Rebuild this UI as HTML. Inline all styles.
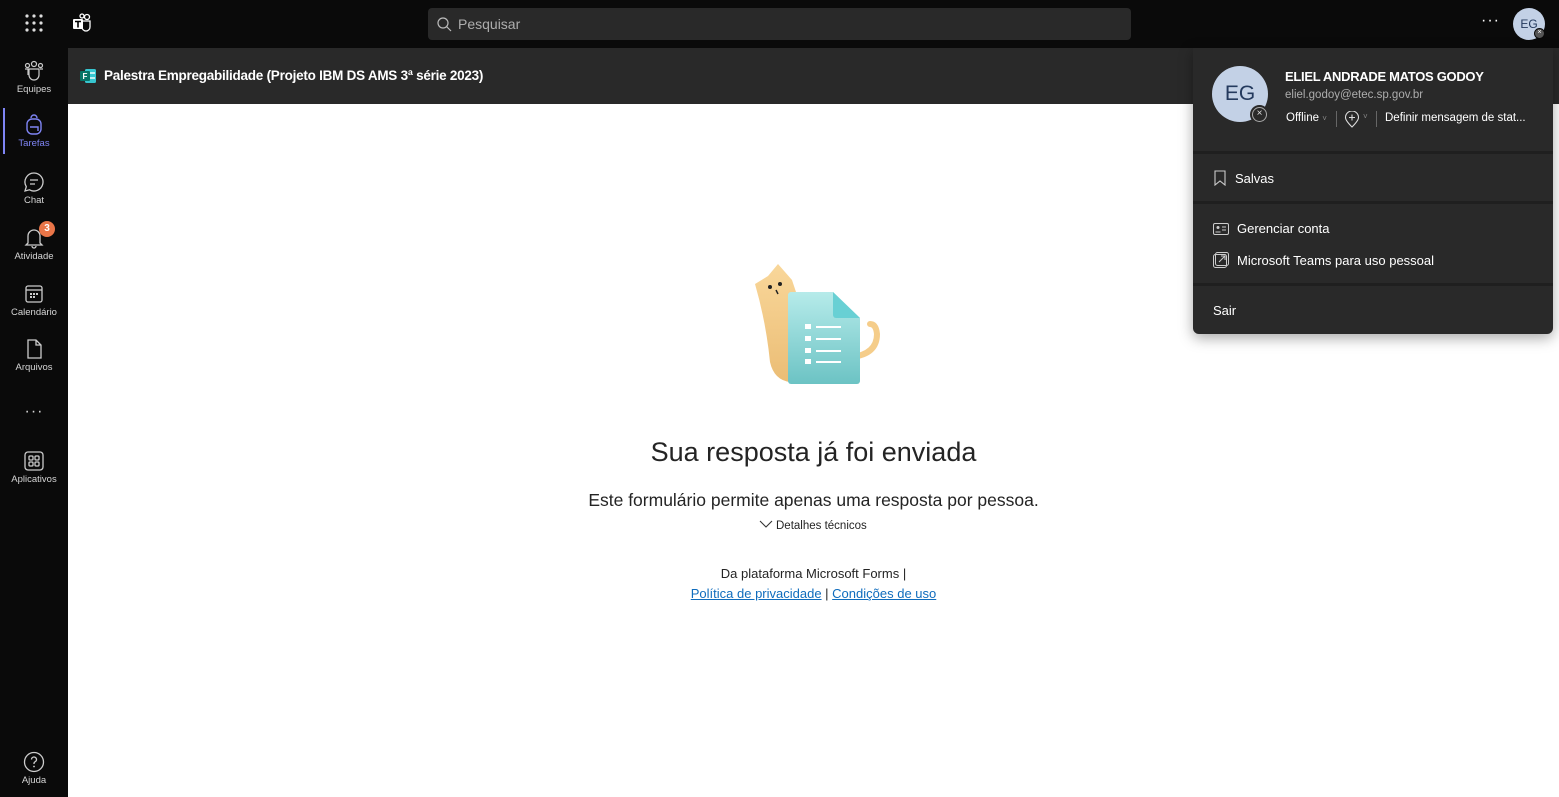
<!DOCTYPE html>
<html><head><meta charset="utf-8"><style>
*{margin:0;padding:0;box-sizing:border-box}
body{width:1559px;height:797px;overflow:hidden;background:#fff;font-family:"Liberation Sans",sans-serif;position:relative}
.top{position:absolute;left:0;top:0;width:1559px;height:48px;background:#0a0a0a}
.side{position:absolute;left:0;top:48px;width:68px;height:749px;background:#0a0a0a}
.nav{position:absolute;left:0;width:68px;text-align:center;color:#d6d6d6;font-size:9.5px}
.nav svg{display:block;margin:0 auto 2px}
.title{position:absolute;left:68px;top:48px;width:1491px;height:56px;background:#292929}
.pop{position:absolute;left:1193px;top:48px;width:360px;height:286px;background:#292929;border-radius:0 0 6px 6px;box-shadow:0 4px 14px rgba(0,0,0,.35);color:#fff}
.sep{position:absolute;left:0;width:360px;height:3px;background:#1f1f1f}
.item{position:absolute;left:20px;font-size:13px;color:#fff;display:flex;align-items:center;gap:8px}
</style></head><body>
<div class="top">
 <svg style="position:absolute;left:25px;top:14px" width="18" height="18"><g fill="#ddd"><circle cx="2" cy="2" r="1.6"/><circle cx="9" cy="2" r="1.6"/><circle cx="16" cy="2" r="1.6"/><circle cx="2" cy="9" r="1.6"/><circle cx="9" cy="9" r="1.6"/><circle cx="16" cy="9" r="1.6"/><circle cx="2" cy="16" r="1.6"/><circle cx="9" cy="16" r="1.6"/><circle cx="16" cy="16" r="1.6"/></g></svg>
 <svg style="position:absolute;left:72px;top:13px" width="20" height="20"><circle cx="15" cy="4" r="2.5" fill="none" stroke="#fff" stroke-width="1.3"/><circle cx="10" cy="3" r="2" fill="none" stroke="#fff" stroke-width="1.3"/><path d="M8 8h10v6a4 4 0 0 1-8 0z" fill="none" stroke="#fff" stroke-width="1.3"/><rect x="1" y="6" width="10" height="10" rx="1" fill="#fff"/><path d="M3 8.5h6M6 8.5v6" stroke="#000" stroke-width="1.6"/></svg>
 <div style="position:absolute;left:428px;top:8px;width:703px;height:32px;background:#292929;border-radius:4px;color:#adadad;font-size:14px;line-height:32px;padding-left:30px">Pesquisar
  <svg style="position:absolute;left:9px;top:9px" width="15" height="15"><circle cx="6" cy="6" r="5" fill="none" stroke="#bbb" stroke-width="1.2"/><path d="M9.5 9.5L14 14" stroke="#bbb" stroke-width="1.2"/></svg></div>
 <div style="position:absolute;left:1481px;top:12px;color:#fff;font-size:16px;letter-spacing:1px">···</div>
 <div style="position:absolute;left:1513px;top:8px;width:32px;height:32px;border-radius:50%;background:#c3d1e6;color:#243a5e;font-size:12px;line-height:32px;text-align:center">EG</div>
 <div style="position:absolute;left:1534px;top:28px;width:11px;height:11px;border-radius:50%;background:#555;border:1.5px solid #0a0a0a;color:#fff;font-size:7px;line-height:8px;text-align:center">×</div>
</div>
<div class="side">
 <div style="position:absolute;left:3px;top:60px;width:2px;height:46px;background:#7f85f5"></div>
 <div class="nav" style="top:12px"><svg width="22" height="22"><g fill="none" stroke="#ccc" stroke-width="1.2"><circle cx="11" cy="4" r="2.5"/><circle cx="4.5" cy="5.5" r="2"/><circle cx="17.5" cy="5.5" r="2"/><path d="M6 9h10v6a5 5 0 0 1-10 0z"/><path d="M2 9h3v6M20 9h-3"/></g></svg>Equipes</div>
 <div class="nav" style="top:66px;color:#7f85f5"><svg width="22" height="22"><g fill="none" stroke="#7f85f5" stroke-width="1.4"><path d="M8 4a3 3 0 0 1 6 0"/><rect x="4" y="5" width="14" height="15" rx="5"/><path d="M7 13h8v4"/></g></svg>Tarefas</div>
 <div class="nav" style="top:123px"><svg width="22" height="22"><g fill="none" stroke="#ccc" stroke-width="1.3"><path d="M11 2a9 9 0 1 1-4.5 16.8L2 20l1.3-4.3A9 9 0 0 1 11 2z"/><path d="M7 9h8M7 13h5"/></g></svg>Chat</div>
 <div class="nav" style="top:179px"><svg width="22" height="22"><g fill="none" stroke="#ccc" stroke-width="1.3"><path d="M5 16V9a6 6 0 0 1 12 0v7l2 2H3z"/><path d="M9 19a2 2 0 0 0 4 0"/></g></svg>Atividade</div>
 <div style="position:absolute;left:39px;top:173px;width:16px;height:16px;border-radius:50%;background:#e97548;color:#fff;font-size:10px;font-weight:bold;text-align:center;line-height:16px">3</div>
 <div class="nav" style="top:235px"><svg width="22" height="22"><g fill="none" stroke="#ccc" stroke-width="1.3"><rect x="3" y="3" width="16" height="16" rx="2"/><path d="M3 7h16"/></g><g fill="#ccc"><rect x="7" y="10" width="2" height="2"/><rect x="10" y="10" width="2" height="2"/><rect x="13" y="10" width="2" height="2"/><rect x="7" y="13" width="2" height="2"/><rect x="10" y="13" width="2" height="2"/></g></svg>Calendário</div>
 <div class="nav" style="top:290px"><svg width="22" height="22"><path d="M5 2h8l5 5v13H5z M13 2v5h5" fill="none" stroke="#ccc" stroke-width="1.3"/></svg>Arquivos</div>
 <div class="nav" style="top:355px;font-size:16px;letter-spacing:1px">···</div>
 <div class="nav" style="top:402px"><svg width="22" height="22"><g fill="none" stroke="#ccc" stroke-width="1.3"><rect x="2" y="2" width="18" height="18" rx="3"/><rect x="6" y="6" width="4" height="4" rx="1"/><rect x="12" y="6" width="4" height="4" rx="1"/><rect x="6" y="12" width="4" height="4" rx="1"/><rect x="12" y="12" width="4" height="4" rx="1"/></g></svg>Aplicativos</div>
 <div class="nav" style="top:703px"><svg width="22" height="22"><g fill="none" stroke="#ccc" stroke-width="1.3"><circle cx="11" cy="11" r="9.5"/><path d="M8.5 8.5a2.5 2.5 0 1 1 3.5 2.3c-.8.4-1 1-1 1.7v.5"/></g><circle cx="11" cy="15.5" r=".9" fill="#ccc"/></svg>Ajuda</div>
</div>
<div class="title">
 <svg style="position:absolute;left:12px;top:20px" width="16" height="16"><rect x="5" y="1" width="11" height="14" rx="1.5" fill="#37c6d0"/><rect x="9" y="4" width="6" height="2" fill="#fff" opacity=".7"/><rect x="9" y="9" width="6" height="2" fill="#fff" opacity=".7"/><rect x="0" y="3" width="10" height="10" rx="1" fill="#077568"/><text x="2.5" y="11" font-size="8" font-weight="bold" fill="#fff" font-family="Liberation Sans">F</text></svg>
 <div style="position:absolute;left:36px;top:20px;color:#fff;font-size:13.5px;font-weight:bold;letter-spacing:-0.25px">Palestra Empregabilidade (Projeto IBM DS AMS 3ª série 2023)</div>
</div>
<svg style="position:absolute;left:752px;top:262px" width="136" height="124">
 <defs><linearGradient id="g" x1="0" y1="0" x2="0" y2="1"><stop offset="0" stop-color="#b6ebea"/><stop offset="1" stop-color="#6cc3c4"/></linearGradient><linearGradient id="c" x1="0" y1="0" x2="0" y2="1"><stop offset="0" stop-color="#f9d79a"/><stop offset="1" stop-color="#ebbd75"/></linearGradient></defs>
 <path d="M3 22 L16 14 L26 2 L40 18 L46 36 L44 100 L38 120 Q22 118 18 100 Q14 60 3 22z" fill="url(#c)"/>
 <path d="M100 95 Q125 92 125 72 Q124 62 118 62" fill="none" stroke="#f5cd8a" stroke-width="6" stroke-linecap="round"/>
 <circle cx="18" cy="25" r="2" fill="#222"/><circle cx="28" cy="22" r="2" fill="#222"/><path d="M24 28l2 4" stroke="#222" stroke-width="1.5"/>
 <path d="M39 30h42l27 26v63a3 3 0 0 1-3 3H39a3 3 0 0 1-3-3V33a3 3 0 0 1 3-3z" fill="url(#g)"/>
 <path d="M81 30l27 26H84a3 3 0 0 1-3-3z" fill="#68d0d4"/>
 <g fill="#fff"><rect x="53" y="62" width="6" height="5"/><rect x="53" y="74" width="6" height="5"/><rect x="53" y="86" width="6" height="5"/><rect x="53" y="97" width="6" height="5"/><rect x="64" y="64" width="25" height="2"/><rect x="64" y="76" width="25" height="2"/><rect x="64" y="88" width="25" height="2"/><rect x="64" y="99" width="25" height="2"/></g>
</svg>
<div style="position:absolute;left:0;width:1627px;top:437px;text-align:center;font-size:27px;color:#242424">Sua resposta já foi enviada</div>
<div style="position:absolute;left:0;width:1627px;top:490px;text-align:center;font-size:17.5px;color:#242424">Este formulário permite apenas uma resposta por pessoa.</div>
<div style="position:absolute;left:759px;top:520px;font-size:11.5px;color:#242424"><svg width="14" height="9" style="margin-right:3px"><path d="M1 1l6 6 6-6" fill="none" stroke="#333" stroke-width="1.1"/></svg>Detalhes técnicos</div>
<div style="position:absolute;left:0;width:1627px;top:566px;text-align:center;font-size:13px;color:#242424">Da plataforma Microsoft Forms |</div>
<div style="position:absolute;left:0;width:1627px;top:586px;text-align:center;font-size:13px;color:#242424"><span style="color:#0f6cbd;text-decoration:underline">Política de privacidade</span> | <span style="color:#0f6cbd;text-decoration:underline">Condições de uso</span></div>
<div class="pop">
 <div style="position:absolute;left:19px;top:18px;width:56px;height:56px;border-radius:50%;background:#c3d1e6;color:#243a5e;font-size:21px;line-height:56px;text-align:center">EG</div>
 <div style="position:absolute;left:57px;top:57px;width:19px;height:19px;border-radius:50%;background:#292929;"><div style="margin:2px;width:15px;height:15px;border-radius:50%;border:1.5px solid #aaa;color:#ddd;font-size:10px;line-height:11px;text-align:center">×</div></div>
 <div style="position:absolute;left:92px;top:21px;font-size:13px;font-weight:bold;letter-spacing:-0.3px">ELIEL ANDRADE MATOS GODOY</div>
 <div style="position:absolute;left:92px;top:41px;font-size:11.5px;color:#adadad">eliel.godoy@etec.sp.gov.br</div>
 <div style="position:absolute;left:93px;top:64px;font-size:11.5px;color:#fff">Offline <span style="color:#888;font-size:8px">˅</span></div>
 <div style="position:absolute;left:143px;top:63px;width:1px;height:16px;background:#666"></div>
 <svg style="position:absolute;left:151px;top:63px" width="16" height="17"><path d="M8 16C3 11 1.5 8.5 1.5 6.5a6.5 6.5 0 0 1 13 0C14.5 8.5 13 11 8 16z M5 6.5h6M8 3.5v6" fill="none" stroke="#ddd" stroke-width="1.1"/></svg>
 <div style="position:absolute;left:170px;top:64px;font-size:8px;color:#888">˅</div>
 <div style="position:absolute;left:183px;top:63px;width:1px;height:16px;background:#666"></div>
 <div style="position:absolute;left:192px;top:64px;font-size:11.5px;color:#fff">Definir mensagem de stat...</div>
 <div class="sep" style="top:103px"></div>
 <div class="item" style="top:122px"><svg width="14" height="16"><path d="M2 1h10v14l-5-4-5 4z" fill="none" stroke="#ccc" stroke-width="1.1"/></svg>Salvas</div>
 <div class="sep" style="top:153px"></div>
 <div class="item" style="top:173px"><svg width="16" height="12"><rect x=".5" y=".5" width="15" height="11" rx="1.5" fill="none" stroke="#ccc"/><circle cx="5" cy="4.5" r="1.5" fill="#ccc"/><path d="M2.5 9h5M9 4h4M9 7h4" stroke="#ccc"/></svg>Gerenciar conta</div>
 <div class="item" style="top:204px"><svg width="16" height="16"><rect x=".5" y="2.5" width="13" height="13" rx="2" fill="none" stroke="#ccc"/><rect x="2.5" y=".5" width="13" height="13" rx="2" fill="none" stroke="#ccc"/><path d="M6 10l6-6M8 4h4v4" fill="none" stroke="#ccc"/></svg>Microsoft Teams para uso pessoal</div>
 <div class="sep" style="top:235px"></div>
 <div class="item" style="top:255px">Sair</div>
</div>
</body></html>
